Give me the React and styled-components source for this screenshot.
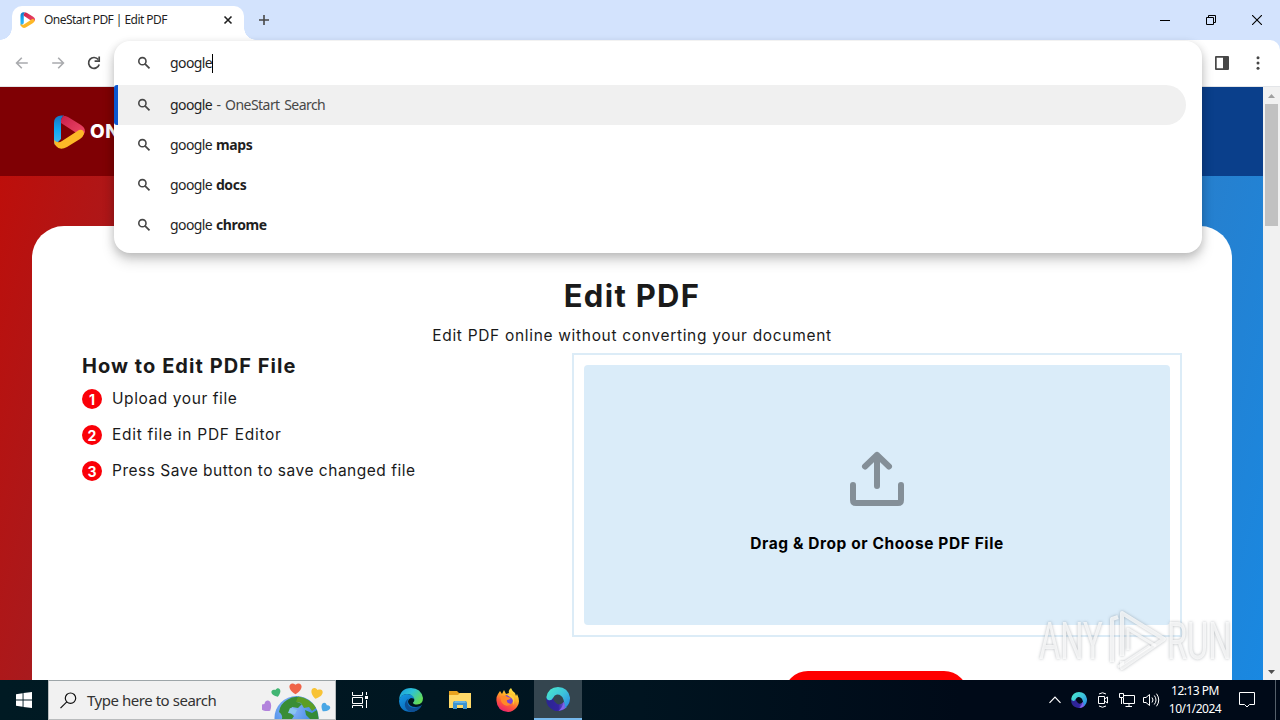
import styled, { createGlobalStyle, css } from 'styled-components';

const GlobalStyle = createGlobalStyle`
  * {
    box-sizing: border-box;
  }

  body {
    margin: 0;
    overflow: hidden;
    font-family: 'Open Sans', 'Noto Sans', sans-serif;
  }

  svg {
    display: block;
    flex: none;
  }
`;

const Desktop = styled.div`
  position: relative;
  display: flex;
  flex-direction: column;
  width: 1280px;
  height: 720px;
  overflow: hidden;
  background: #d3e3fd;
`;

const TabStrip = styled.div`
  display: flex;
  align-items: flex-end;
  height: 40px;
  padding-left: 12px;
  background: #d3e3fd;
`;

const Tab = styled.div`
  position: relative;
  display: flex;
  align-items: center;
  width: 232px;
  height: 34px;
  padding: 0 9px 6px 8px;
  border-radius: 10px 10px 0 0;
  background: #fff;

  &::before,
  &::after {
    content: '';
    position: absolute;
    bottom: 0;
    width: 12px;
    height: 12px;
  }

  &::before {
    left: -12px;
    background: radial-gradient(circle at 0 0, transparent 11.5px, #fff 12px);
  }

  &::after {
    right: -12px;
    background: radial-gradient(circle at 100% 0, transparent 11.5px, #fff 12px);
  }
`;

const TabTitle = styled.span`
  flex: 1;
  margin-left: 8px;
  font-family: 'Noto Sans', sans-serif;
  font-size: 12px;
  line-height: 16px;
  letter-spacing: -0.55px;
  color: #1f1f1f;
  white-space: nowrap;
`;

const NewTab = styled.div`
  display: flex;
  align-items: center;
  height: 40px;
  margin-left: 14px;
`;

const WindowButtons = styled.div`
  display: flex;
  margin-left: auto;
`;

const WindowButton = styled.div`
  display: flex;
  align-items: center;
  justify-content: center;
  width: 46px;
  height: 40px;
`;

const Toolbar = styled.div`
  display: flex;
  align-items: center;
  gap: 20px;
  height: 47px;
  padding: 0 14px;
  border-bottom: 1px solid #e3e5e8;
  border-radius: 0 10px 0 0;
  background: #fff;
`;

const ToolbarEnd = styled.div`
  display: flex;
  align-items: center;
  gap: 20px;
  margin-left: auto;
`;

const Omnibox = styled.div`
  position: absolute;
  top: 41px;
  left: 114px;
  z-index: 2;
  width: 1088px;
  height: 212px;
  border-radius: 16px;
  background: #fff;
  box-shadow: 0 3px 10px rgba(0, 0, 0, 0.18), 0 8px 14px rgba(0, 0, 0, 0.14);
`;

const SuggestionRow = styled.div`
  display: flex;
  align-items: center;
  gap: 18px;
  height: ${({ $input }) => ($input ? 44 : 40)}px;
  margin-right: 16px;
  padding-left: 22px;
  font-family: 'Noto Sans', sans-serif;
  font-size: 14px;
  line-height: 20px;
  letter-spacing: -0.6px;
  word-spacing: 1.4px;
  color: #1f1f1f;
  white-space: pre;

  b {
    letter-spacing: -0.35px;
    word-spacing: 0.5px;
  }

  ${({ $selected }) =>
    $selected &&
    css`
      padding-left: 18px;
      border-left: 4px solid #0b57d0;
      border-radius: 3px 20px 20px 3px;
      background: #f0f0f0;
    `}
`;

const Muted = styled.span`
  letter-spacing: -0.54px;
  color: #474747;
`;

const Caret = styled.span`
  display: inline-block;
  width: 1px;
  height: 19px;
  vertical-align: middle;
  background: #000;
`;

const Viewport = styled.div`
  display: flex;
  height: 593px;
  overflow: hidden;
`;

const Page = styled.div`
  width: 1263px;
  background: linear-gradient(105deg, #c00d08 0%, #a91a1d 13%, #2680cf 87%, #1988e1 100%);
`;

const PageHeader = styled.div`
  display: flex;
  align-items: center;
  gap: 3px;
  height: 89px;
  padding-left: 53px;
  background: linear-gradient(90deg, #7f0004 10%, #0a3f8b 92%);
`;

const Brand = styled.span`
  font-family: Inter, sans-serif;
  font-size: 19px;
  font-weight: 800;
  letter-spacing: 0.5px;
  color: #fff;
`;

const Card = styled.div`
  width: 1200px;
  height: 560px;
  margin: 50px 0 0 32px;
  padding: 48px 50px 0;
  border-radius: 32px 32px 0 0;
  background: #fff;
  font-family: Inter, sans-serif;
  color: #1a1a1a;
`;

const Title = styled.h1`
  margin: 0;
  font-size: 31px;
  font-weight: 700;
  line-height: 44px;
  letter-spacing: 1.3px;
  text-align: center;
`;

const Subtitle = styled.p`
  margin: 6px 0 0;
  font-size: 15.5px;
  line-height: 24px;
  letter-spacing: 0.68px;
  text-align: center;
`;

const Columns = styled.div`
  display: flex;
  margin-top: 5px;
`;

const Guide = styled.div`
  width: 490px;
`;

const GuideTitle = styled.h2`
  margin: 0;
  font-size: 20px;
  font-weight: 700;
  line-height: 26px;
  letter-spacing: 1.05px;
`;

const Steps = styled.ol`
  display: flex;
  flex-direction: column;
  gap: 12px;
  margin: 8px 0 0;
  padding: 0;
  list-style: none;
`;

const Step = styled.li`
  display: flex;
  align-items: center;
  gap: 10px;
  height: 24px;
  font-size: 15.5px;
  letter-spacing: ${({ $tracking }) => $tracking}px;
`;

const StepText = styled.span`
  padding-bottom: 1px;
`;

const StepNumber = styled.span`
  display: flex;
  align-items: center;
  justify-content: center;
  width: 20px;
  height: 20px;
  border-radius: 50%;
  background: #fa0008;
  color: #fff;
  font-size: 14px;
  font-weight: 700;
  letter-spacing: 0;
`;

const UploadColumn = styled.div`
  display: flex;
  flex-direction: column;
  align-items: center;
  gap: 34px;
  width: 610px;
`;

const DropFrame = styled.div`
  width: 610px;
  height: 284px;
  padding: 10px;
  border: 2px solid #dcecf7;
`;

const DropZone = styled.div`
  display: flex;
  flex-direction: column;
  align-items: center;
  height: 260px;
  padding-top: 86px;
  border-radius: 4px;
  background: #daecf9;
  color: #000;
  font-size: 15.5px;
  font-weight: 700;
  line-height: 20px;
  white-space: nowrap;
`;

const DropText = styled.span`
  margin-top: 27px;
  letter-spacing: 0.59px;
`;

const UploadButton = styled.div`
  flex: none;
  width: 184px;
  height: 48px;
  margin-right: 2px;
  border-radius: 24px;
  background: #ff0000;
`;

const Scrollbar = styled.div`
  display: flex;
  flex-direction: column;
  align-items: center;
  width: 17px;
  background: #f1f1f1;
`;

const ScrollArrow = styled.div`
  display: flex;
  align-items: center;
  justify-content: center;
  width: 17px;
  height: 17px;
`;

const ScrollThumb = styled.div`
  width: 13px;
  height: 122px;
  margin-bottom: auto;
  background: #c1c1c1;
`;

const Watermark = styled.div`
  position: absolute;
  top: 604px;
  left: 1032px;
  z-index: 3;
`;

const Taskbar = styled.div`
  display: flex;
  height: 40px;
  background: linear-gradient(90deg, #001a23 0%, #001420 50%, #000a18 75%);
`;

const TaskButton = styled.div`
  display: flex;
  align-items: center;
  justify-content: center;
  width: ${({ $width }) => $width || 48}px;
  height: 40px;
  ${({ $active }) =>
    $active &&
    css`
      border-bottom: 2px solid #76b9ed;
      background: #34454f;
    `}
`;

const SearchBox = styled.div`
  display: flex;
  align-items: center;
  width: 288px;
  height: 40px;
  padding: 0 3px 0 11px;
  border: 1px solid #b9bcbd;
  border-top-color: #9da5a8;
  background: #f1f1f1;
  font-family: 'Noto Sans', sans-serif;
  font-size: 15px;
  letter-spacing: -0.46px;
  color: #333;
  white-space: nowrap;

  span {
    flex: 1;
    margin-left: 10px;
  }
`;

const Tray = styled.div`
  display: flex;
  align-items: center;
  margin-left: auto;
`;

const TrayIcon = styled.div`
  display: flex;
  align-items: center;
  justify-content: center;
  width: 24px;
  height: 40px;
`;

const Clock = styled.div`
  width: 60px;
  padding-left: 4px;
  color: #fff;
  font-family: 'Noto Sans', sans-serif;
  font-size: 12px;
  line-height: 18px;
  letter-spacing: -0.52px;
  text-align: center;
  white-space: nowrap;
`;

const Notifications = styled.div`
  display: flex;
  align-items: center;
  justify-content: center;
  width: 48px;
  height: 40px;
  margin-right: 4px;
`;

const ShowDesktop = styled.div`
  width: 5px;
  height: 40px;
  border-left: 1px solid #55606a;
`;

function PlayLogo({ size, id }) {
  return (
    <svg width={size} height={size} viewBox="0 0 34 34">
      <defs>
        <linearGradient id={`${id}-blue`} x1="0" y1="0" x2="0" y2="1">
          <stop offset="0" stopColor="#1576c4" />
          <stop offset="0.5" stopColor="#11a8f4" />
          <stop offset="1" stopColor="#46b9ee" />
        </linearGradient>
        <linearGradient id={`${id}-red`} x1="0" y1="0" x2="1" y2="1">
          <stop offset="0" stopColor="#c71f49" />
          <stop offset="1" stopColor="#f24a68" />
        </linearGradient>
      </defs>
      <path d="M1 8Q1 1 8 .5H11Q8 2 8 7V24L2 30Q1 28 1 25Z" fill={`url(#${id}-blue)`} />
      <path
        d="M8 .5Q12 0 15 2L28 10Q34 14 31 19L28 21L8 8Q7 4 11 .5Z"
        fill={`url(#${id}-red)`}
      />
      <path d="M1 25Q5 29 9 26L26 15Q31 14 31 19Q30 22 27 24L14 32Q7 36 3 31Q1 29 1 25Z" fill="#fdb827" />
    </svg>
  );
}

const SearchIcon = () => (
  <svg width="16" height="16" viewBox="0 0 16 16" fill="none" stroke="#474747">
    <circle cx="6.4" cy="6.2" r="3.6" strokeWidth="1.6" />
    <path d="M9 8.8L13.5 13.3" strokeWidth="1.8" />
  </svg>
);

function ArrowIcon({ forward }) {
  return (
    <svg width="16" height="16" viewBox="0 0 16 16" fill="none" stroke="#a9abae" strokeWidth="1.6">
      <path d={forward ? 'M2.2 8H13.3M8.2 2.8L13.4 8L8.2 13.2' : 'M13.8 8H2.7M7.8 2.8L2.6 8L7.8 13.2'} />
    </svg>
  );
}

const ReloadIcon = () => (
  <svg width="16" height="16" viewBox="0 0 16 16" fill="none" stroke="#474747" strokeWidth="1.7">
    <path d="M13.2 9.4A5.4 5.4 0 1 1 12.3 4.6" />
    <path d="M13.2 1.6V6.2H8.6" />
  </svg>
);

// Open ring: teal over the top, blue down the right, violet along the bottom
function SwirlIcon({ size, id }) {
  return (
    <svg width={size} height={size} viewBox="0 0 24 24" fill="none">
      <defs>
        <linearGradient id={`${id}-a`} x1="0" y1="0" x2="1" y2="0.9">
          <stop offset="0" stopColor="#4aebcb" />
          <stop offset="0.55" stopColor="#3cc2dc" />
          <stop offset="1" stopColor="#2a86e2" />
        </linearGradient>
        <linearGradient id={`${id}-b`} x1="0" y1="0" x2="1" y2="0">
          <stop offset="0" stopColor="#2a2690" />
          <stop offset="0.6" stopColor="#3323a0" />
          <stop offset="1" stopColor="#8a66ec" />
        </linearGradient>
      </defs>
      <path d="M.2 11Q-.5 20 8 23.4Q15 25.5 20.5 20.5L18 15Q14 19 10.5 16.5Q7.5 14.5 7 11Z" fill={`url(#${id}-b)`} />
      <path
        d="M.4 10Q2.5 0 12 0Q22 .2 24 10.5Q24.3 17.5 18.6 21.6Q19 18 17.6 13Q16 7.4 11 7.5Q8.5 7.8 7 11Q5.5 14 2.8 13.2Q.3 12.4 .4 10Z"
        fill={`url(#${id}-a)`}
      />
      <path d="M17.8 14.5Q19 18.5 18.6 21.6Q16 23.6 12.5 24Q17 20 17.8 14.5Z" fill="#8163ea" />
    </svg>
  );
}

const EdgeIcon = () => (
  <svg width="24" height="24" viewBox="0 0 24 24">
    <defs>
      <linearGradient id="edge-top" x1="0" y1="0" x2="1" y2="0.6">
        <stop offset="0" stopColor="#1698df" />
        <stop offset="0.5" stopColor="#2dc2d6" />
        <stop offset="1" stopColor="#64dc55" />
      </linearGradient>
      <linearGradient id="edge-body" x1="0" y1="0" x2="0.7" y2="1">
        <stop offset="0" stopColor="#1599e5" />
        <stop offset="1" stopColor="#0863b4" />
      </linearGradient>
    </defs>
    <path d="M0 13Q1 6 8 6Q15 6 16 12Q15 10 12 10Q9 11 9 14Q10 19 17 19Q21 19 23 17Q19 24 12 24Q1 24 0 13Z" fill="url(#edge-body)" />
    <path d="M9.5 10.5Q7 15 10.5 18.6Q15 22 22.6 17.6Q19.5 24 12.5 24Q6 22.5 5.8 16.5Q6.2 12.5 9.5 10.5Z" fill="#0e4f94" />
    <path d="M0 12Q1 0 12 0Q22 0 24 10Q24 16 18 16.5Q14 16.5 14 14.5Q16 13 15 10Q13 6 8 6Q2 6 0 12Z" fill="url(#edge-top)" />
  </svg>
);

const FolderIcon = () => (
  <svg width="22" height="20" viewBox="0 0 22 20">
    <path d="M0 1H8L10 3H21V8H0Z" fill="#e8a31f" />
    <path d="M0 5H9L11 3H22V18H0Z" fill="#ffd968" />
    <path d="M4 19V13Q4 11 6 11H16Q18 11 18 13V19H14V15H8V19Z" fill="#3d93d0" />
    <path d="M6 11H16L17 13H5Z" fill="#67b3e4" />
  </svg>
);

const FirefoxIcon = () => (
  <svg width="24" height="24" viewBox="0 0 24 24">
    <defs>
      <linearGradient id="fox" x1="0.8" y1="0" x2="0.3" y2="1">
        <stop offset="0" stopColor="#fff14a" />
        <stop offset="0.4" stopColor="#ffae25" />
        <stop offset="0.7" stopColor="#ff553b" />
        <stop offset="1" stopColor="#e91f72" />
      </linearGradient>
    </defs>
    <path d="M2 6L4 3L6 6L8 2L10 6L13 5Q12 2 15 0Q16 3 19 5L20 8L21 6Q25 14 21 19Q17 24 12 24Q1 23 .5 13Q0 9 2 6Z" fill="url(#fox)" />
    <circle cx="12" cy="12" r="5" fill="#7744d7" />
    <path d="M5 8Q9 7 12 9L15 10Q13 12 11 12Q10 15 15 16Q10 20 6 15Q4 12 5 8Z" fill="#ff8a28" />
    <path d="M11 7Q16 5 18 10Q19 14 17 17Q18 11 14 9Z" fill="#ffcf3d" />
  </svg>
);

const Heart = ({ x, y, scale = 1, turn = 0, color }) => (
  <path
    d="M0 5.5C-11 -1 -5.5 -9 0 -4.5C5.5 -9 11 -1 0 5.5Z"
    fill={color}
    transform={`translate(${x} ${y}) rotate(${turn}) scale(${scale})`}
  />
);

const EarthHearts = () => (
  <svg width="70" height="38" viewBox="0 0 70 38">
    <defs>
      <radialGradient id="ocean" cx="0.35" cy="0.3" r="0.7">
        <stop offset="0" stopColor="#8fb8fa" />
        <stop offset="1" stopColor="#2f7fe0" />
      </radialGradient>
    </defs>
    <circle cx="34.5" cy="37" r="22" fill="url(#ocean)" />
    <path d="M25 19Q31 15 37 16L35 21L40 23L36 27L30 26L27 31L32 35L30 38H20Q21 34 17 31Q18 23 25 19Z" fill="#398d35" />
    <path d="M36 15.5Q48 17 54 27L50 30L47 26L42 27L39 22L34 21Z" fill="#5c9e25" />
    <path d="M43 29L50 32L55 29L56.5 37V38H48L44 34Z" fill="#358b37" />
    <path d="M28 27L35 29L33 33L26 32Z" fill="#8ac6ef" />
    <Heart x={33.5} y={8} color="#f06449" scale={0.96} />
    <Heart x={14.5} y={12} color="#41b572" scale={0.72} turn={-20} />
    <Heart x={54.5} y={13} color="#f8c335" scale={0.9} turn={15} />
    <Heart x={5} y={26} color="#b283dc" scale={0.9} turn={-40} />
    <Heart x={63} y={27} color="#48a6e5" scale={0.72} turn={35} />
  </svg>
);

const suggestions = [
  { tail: ' - OneStart Search', selected: true },
  { tail: 'maps' },
  { tail: 'docs' },
  { tail: 'chrome' },
];

const steps = [
  { text: 'Upload your file', tracking: 0.58 },
  { text: 'Edit file in PDF Editor', tracking: 0.72 },
  { text: 'Press Save button to save changed file', tracking: 0.51 },
];

function BrowserTop() {
  return (
    <>
      <TabStrip>
        <Tab>
          <PlayLogo size={16} id="tab" />
          <TabTitle>OneStart PDF | Edit PDF</TabTitle>
          <svg width="14" height="14" viewBox="0 0 14 14" stroke="#1f1f1f" strokeWidth="1.6">
            <path d="M3.5 3.5L10.5 10.5M10.5 3.5L3.5 10.5" />
          </svg>
        </Tab>
        <NewTab>
          <svg width="12" height="12" viewBox="0 0 12 12" stroke="#474747" strokeWidth="1.6">
            <path d="M6 1V11M1 6H11" />
          </svg>
        </NewTab>
        <WindowButtons>
          <WindowButton>
            <svg width="10" height="10" viewBox="0 0 10 10">
              <path d="M0 5H10V6H0Z" />
            </svg>
          </WindowButton>
          <WindowButton>
            <svg width="10" height="10" viewBox="0 0 10 10" fill="none" stroke="#000">
              <path d="M.5 2.5H7.5V9.5H.5ZM2.5 2.5V.5H9.5V7.5H7.5" />
            </svg>
          </WindowButton>
          <WindowButton>
            <svg width="10" height="10" viewBox="0 0 10 10" stroke="#000" strokeWidth="1.1">
              <path d="M0 0L10 10M10 0L0 10" />
            </svg>
          </WindowButton>
        </WindowButtons>
      </TabStrip>
      <Toolbar>
        <ArrowIcon />
        <ArrowIcon forward />
        <ReloadIcon />
        <ToolbarEnd>
          <svg width="16" height="16" viewBox="0 0 16 16">
            <path d="M2 1H14Q15 1 15 2V14Q15 15 14 15H2Q1 15 1 14V2Q1 1 2 1ZM2.7 2.7V13.3H9V2.7Z" fill="#474747" fillRule="evenodd" />
          </svg>
          <svg width="16" height="16" viewBox="0 0 16 16" fill="#474747">
            <circle cx="8" cy="2.7" r="1.5" />
            <circle cx="8" cy="8" r="1.5" />
            <circle cx="8" cy="13.3" r="1.5" />
          </svg>
        </ToolbarEnd>
      </Toolbar>
    </>
  );
}

function SearchPopup() {
  return (
    <Omnibox>
      <SuggestionRow $input>
        <SearchIcon />
        <span>
          google
          <Caret />
        </span>
      </SuggestionRow>
      {suggestions.map(({ tail, selected }) => (
        <SuggestionRow key={tail} $selected={selected}>
          <SearchIcon />
          <span>
            google{selected ? <Muted>{tail}</Muted> : <b> {tail}</b>}
          </span>
        </SuggestionRow>
      ))}
    </Omnibox>
  );
}

function PdfPage() {
  return (
    <Page>
      <PageHeader>
        <PlayLogo size={34} id="site" />
        <Brand>ON</Brand>
      </PageHeader>
      <Card>
        <Title>Edit PDF</Title>
        <Subtitle>Edit PDF online without converting your document</Subtitle>
        <Columns>
          <Guide>
            <GuideTitle>How to Edit PDF File</GuideTitle>
            <Steps>
              {steps.map(({ text, tracking }, index) => (
                <Step key={text} $tracking={tracking}>
                  <StepNumber>{index + 1}</StepNumber>
                  <StepText>{text}</StepText>
                </Step>
              ))}
            </Steps>
          </Guide>
          <UploadColumn>
            <DropFrame>
              <DropZone>
                <svg width="56" height="56" viewBox="0 0 56 56" fill="none" stroke="#848f98" strokeWidth="6" strokeLinecap="round" strokeLinejoin="round">
                  <path d="M28 35V4M16 15.5L28 4L40 15.5M4 34V49Q4 52 7 52H49Q52 52 52 49V34" />
                </svg>
                <DropText>Drag &amp; Drop or Choose PDF File</DropText>
              </DropZone>
            </DropFrame>
            <UploadButton />
          </UploadColumn>
        </Columns>
      </Card>
    </Page>
  );
}

function WindowsTaskbar() {
  return (
    <Taskbar>
      <TaskButton>
        <svg width="16" height="16" viewBox="0 0 16 16" fill="#fff">
          <path d="M0 2.2L6.6 1.3V7.5H0ZM7.5 1.1L16 0V7.5H7.5ZM0 8.5H6.6V14.7L0 13.8ZM7.5 8.5H16V16L7.5 14.9Z" />
        </svg>
      </TaskButton>
      <SearchBox>
        <svg width="17" height="17" viewBox="0 0 17 17" fill="none" stroke="#111" strokeWidth="1.2">
          <circle cx="10.5" cy="6.2" r="5.2" />
          <path d="M6.8 9.9L.5 16.2" />
        </svg>
        <span>Type here to search</span>
        <EarthHearts />
      </SearchBox>
      <TaskButton>
        <svg width="16" height="16" viewBox="0 0 16 16" fill="none" stroke="#fff">
          <path d="M.5 0V3.5H10.5V0M.5 5.5H10.5V11.5H.5ZM.5 16V13.5H10.5V16M14.5 0V3M14.5 8V16" />
          <path d="M13 4H16V7H13Z" fill="#fff" stroke="none" />
        </svg>
      </TaskButton>
      <TaskButton $width={54}>
        <EdgeIcon />
      </TaskButton>
      <TaskButton $width={44}>
        <FolderIcon />
      </TaskButton>
      <TaskButton $width={52}>
        <FirefoxIcon />
      </TaskButton>
      <TaskButton $active>
        <SwirlIcon size={24} id="task" />
      </TaskButton>
      <Tray>
        <TrayIcon>
          <svg width="12" height="8" viewBox="0 0 12 8" fill="none" stroke="#fff" strokeWidth="1.2">
            <path d="M.5 6.8L6 1.2L11.5 6.8" />
          </svg>
        </TrayIcon>
        <TrayIcon>
          <SwirlIcon size={16} id="tray" />
        </TrayIcon>
        <TrayIcon>
          <svg width="12" height="16" viewBox="0 0 12 16" fill="none" stroke="#fff">
            <path d="M1.5 4.5H7.5V11.5H1.5ZM7.5 7L10.5 5V11L7.5 9M2 2Q5.5-.5 9 2M2 14Q5.5 16.5 9 14" />
          </svg>
        </TrayIcon>
        <TrayIcon>
          <svg width="16" height="14" viewBox="0 0 16 14" fill="none" stroke="#fff">
            <path d="M5 2.5H15.5V10.5H4.5V5M.5 .5H4.5V4.5H.5ZM2.5 4.5V11M10 10.5V13.5M6.5 13.5H13" />
          </svg>
        </TrayIcon>
        <TrayIcon>
          <svg width="17" height="14" viewBox="0 0 17 14" fill="none" stroke="#fff">
            <path d="M.5 4.5H3L6.5 1.5V12.5L3 9.5H.5ZM9 4.5Q11 7 9 9.5M11.3 2.5Q14.7 7 11.3 11.5M13.5 .7Q18 7 13.5 13.3" />
          </svg>
        </TrayIcon>
        <Clock>
          12:13 PM
          <br />
          10/1/2024
        </Clock>
        <Notifications>
          <svg width="16" height="16" viewBox="0 0 16 16" fill="none" stroke="#fff">
            <path d="M.5 .5H15.5V12.5H10.5L8 15L5.5 12.5H.5Z" />
          </svg>
        </Notifications>
        <ShowDesktop />
      </Tray>
    </Taskbar>
  );
}

function AnyRunMark() {
  return (
    <Watermark>
      <svg
        width="210"
        height="76"
        viewBox="0 0 210 76"
        style={{ filter: 'drop-shadow(0 0 1.5px rgba(70, 80, 90, 0.5))' }}
      >
        <g fill="#fff" fillOpacity="0.75" fontFamily="Roboto, sans-serif" fontSize="51">
          <text transform="translate(7 55) scale(0.64 1)">ANY</text>
          <text transform="translate(135 55) scale(0.64 1)">RUN</text>
        </g>
        <g fill="none" stroke="#fff" strokeOpacity="0.75" strokeWidth="4" strokeLinejoin="round">
          <path d="M80 58V15L86 13M90 52V9L132 35L90 64V57" />
          <path d="M96 46V25L124 42M86 63L118 42" strokeWidth="3" />
        </g>
      </svg>
    </Watermark>
  );
}

export default function App() {
  return (
    <Desktop>
      <GlobalStyle />
      <BrowserTop />
      <SearchPopup />
      <Viewport>
        <PdfPage />
        <Scrollbar>
          <ScrollArrow>
            <svg width="7" height="4" viewBox="0 0 7 4" fill="#a0a0a0">
              <path d="M0 4L3.5 0L7 4Z" />
            </svg>
          </ScrollArrow>
          <ScrollThumb />
          <ScrollArrow>
            <svg width="7" height="4" viewBox="0 0 7 4" fill="#505050">
              <path d="M0 0L3.5 4L7 0Z" />
            </svg>
          </ScrollArrow>
        </Scrollbar>
      </Viewport>
      <WindowsTaskbar />
      <AnyRunMark />
    </Desktop>
  );
}
